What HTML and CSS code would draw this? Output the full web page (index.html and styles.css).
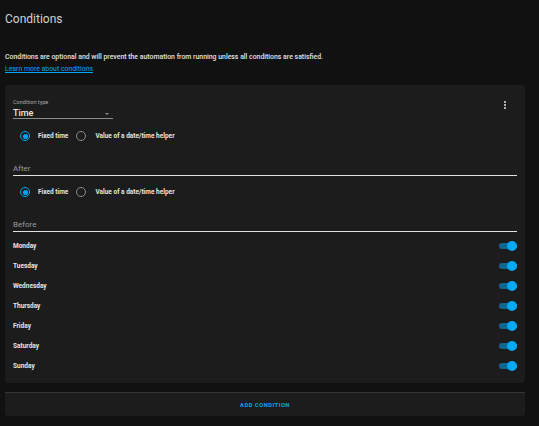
FILE: index.html
```html
<!DOCTYPE html>
<html>
<head>
<meta charset="utf-8">
<link rel="stylesheet" href="styles.css">
</head>
<body>
<div class="page">
  <h1 class="title">Conditions</h1>
  <p class="desc">Conditions are optional and will prevent the automation from running unless all conditions are satisfied.</p>
  <a class="link" href="#">Learn more about conditions</a>

  <div class="card">
    <div class="kebab"><span></span><span></span><span></span></div>
    <div class="select">
      <div class="select-label">Condition type</div>
      <div class="select-value"><span>Time</span><span class="arrow"></span></div>
    </div>

    <div class="radios first">
      <span class="radio on"></span><span class="rlabel">Fixed time</span>
      <span class="radio"></span><span class="rlabel">Value of a date/time helper</span>
    </div>

    <div class="field">After</div>

    <div class="radios">
      <span class="radio on"></span><span class="rlabel">Fixed time</span>
      <span class="radio"></span><span class="rlabel">Value of a date/time helper</span>
    </div>

    <div class="field">Before</div>

    <div class="days">
      <div class="day"><span>Monday</span><span class="toggle"></span></div>
      <div class="day"><span>Tuesday</span><span class="toggle"></span></div>
      <div class="day"><span>Wednesday</span><span class="toggle"></span></div>
      <div class="day"><span>Thursday</span><span class="toggle"></span></div>
      <div class="day"><span>Friday</span><span class="toggle"></span></div>
      <div class="day"><span>Saturday</span><span class="toggle"></span></div>
      <div class="day"><span>Sunday</span><span class="toggle"></span></div>
    </div>
  </div>

  <div class="card add">
    <span class="add-btn">ADD CONDITION</span>
  </div>
</div>
</body>
</html>
```

FILE: styles.css
```css
html, body {
  margin: 0;
  padding: 0;
  background: #111111;
  height: 100%;
}
body {
  font-family: Roboto, "Liberation Sans", sans-serif;
  color: #e1e1e1;
}
.page {
  padding: 0 14px 0 5px;
  display: flex;
  flex-direction: column;
}
.title {
  margin: 12px 0 0 0;
  font-size: 12px;
  line-height: 15px;
  font-weight: 400;
  color: #d2d2d2;
}
.desc {
  margin: 24px 0 0 0;
  font-size: 6.9px;
  line-height: 12px;
  font-weight: 500;
  color: #e1e1e1;
}
.link {
  display: block;
  font-size: 6.9px;
  line-height: 12px;
  color: #03a9f4;
  text-decoration: underline;
  align-self: flex-start;
}
.card {
  position: relative;
  margin-top: 10px;
  background: #1c1c1c;
  border-radius: 3px;
  padding: 13px 8px 7px 8px;
  display: flex;
  flex-direction: column;
}
.kebab {
  position: absolute;
  top: 16px;
  right: 19px;
  display: flex;
  flex-direction: column;
  gap: 1px;
}
.kebab span {
  width: 2px;
  height: 2px;
  background: #b0b0b0;
}
.select {
  width: 100px;
  border-bottom: 1px solid #8c8c8c;
}
.select-label {
  font-size: 5.5px;
  line-height: 8px;
  color: #a8a8a8;
}
.select-value {
  margin-top: 2px;
  height: 10px;
  display: flex;
  align-items: center;
  justify-content: space-between;
  font-size: 9px;
  font-weight: 500;
  color: #e8e8e8;
}
.arrow {
  width: 0;
  height: 0;
  margin-right: 4px;
  margin-top: 1px;
  border-left: 2.5px solid transparent;
  border-right: 2.5px solid transparent;
  border-top: 2.5px solid #8c8c8c;
}
.radios {
  margin-top: 9px;
  height: 14px;
  display: flex;
  align-items: center;
  padding-left: 7px;
}
.radios.first {
  margin-top: 10px;
}
.radio {
  box-sizing: border-box;
  width: 10px;
  height: 10px;
  border-radius: 50%;
  border: 1.4px solid #8a8a8a;
  display: flex;
  align-items: center;
  justify-content: center;
  margin-right: 8px;
}
.radio.on {
  border-color: #03a9f4;
}
.radio.on::after {
  content: "";
  width: 5px;
  height: 5px;
  border-radius: 50%;
  background: #03a9f4;
}
.rlabel {
  font-size: 6.5px;
  font-weight: 700;
  color: #e6e6e6;
  margin-right: 8px;
}
.rlabel + .radio {
  margin-right: 9px;
}
.field {
  margin-top: 20px;
  font-size: 8px;
  line-height: 12px;
  color: #9b9b9b;
  border-bottom: 1px solid #e1e1e1;
}
.days {
  margin-top: 4px;
  display: flex;
  flex-direction: column;
}
.day {
  height: 20px;
  display: flex;
  align-items: center;
  justify-content: space-between;
  font-size: 6.5px;
  font-weight: 700;
  color: #e6e6e6;
}
.toggle {
  position: relative;
  width: 18px;
  height: 6px;
  border-radius: 3px;
  background: #0e6892;
}
.toggle::after {
  content: "";
  position: absolute;
  right: 0;
  top: -2px;
  width: 10px;
  height: 10px;
  border-radius: 50%;
  background: #03a9f4;
}
.card.add {
  margin-top: 9px;
  padding: 0;
  height: 23px;
  border-top: 1px solid #353535;
  border-radius: 0 0 3px 3px;
  flex-direction: row;
  align-items: center;
  justify-content: center;
}
.add-btn {
  font-size: 5.7px;
  font-weight: 700;
  letter-spacing: 0.55px;
  color: #03a9f4;
}
```
